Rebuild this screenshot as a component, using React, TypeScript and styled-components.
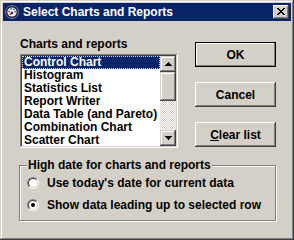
import styled, { createGlobalStyle } from 'styled-components';

const GlobalStyle = createGlobalStyle`
  html, body {
    margin: 0;
    padding: 0;
    background: #d4d0c8;
  }
  body {
    font-family: "Liberation Sans", Arial, sans-serif;
  }
`;

const raised = 'inset -1px -1px #404040, inset 1px 1px #d4d0c8, inset -2px -2px #808080, inset 2px 2px #fff';
const raisedButton = 'inset -1px -1px #404040, inset 1px 1px #fff, inset -2px -2px #808080, inset 2px 2px #d4d0c8';

const items = [
  'Control Chart',
  'Histogram',
  'Statistics List',
  'Report Writer',
  'Data Table (and Pareto)',
  'Combination Chart',
  'Scatter Chart',
];

const ArrowUp = () => (
  <svg width="7" height="4" viewBox="0 0 7 4" shapeRendering="crispEdges">
    <path d="M3 0h1v1H3zM2 1h3v1H2zM1 2h5v1H1zM0 3h7v1H0z" fill="#000" />
  </svg>
);

const ArrowDown = () => (
  <svg width="7" height="4" viewBox="0 0 7 4" shapeRendering="crispEdges">
    <path d="M0 0h7v1H0zM1 1h5v1H1zM2 2h3v1H2zM3 3h1v1H3z" fill="#000" />
  </svg>
);

const CloseGlyph = () => (
  <svg width="8" height="7" viewBox="0 0 8 7" shapeRendering="crispEdges">
    <path
      d="M0 0h2v1H0zM6 0h2v1H6zM1 1h2v1H1zM5 1h2v1H5zM2 2h4v1H2zM3 3h2v1H3zM2 4h4v1H2zM1 5h2v1H1zM5 5h2v1H5zM0 6h2v1H0zM6 6h2v1H6z"
      fill="#000"
    />
  </svg>
);

const AppIcon = () => (
  <svg width="16" height="16" viewBox="0 0 16 16">
    <circle cx="8" cy="8" r="6.6" fill="#2a2a3e" stroke="#8a8a9a" strokeWidth="0.8" />
    <circle cx="8" cy="8" r="4.6" fill="#eef0f6" />
    <rect x="4.2" y="6.8" width="1.6" height="1.4" fill="#d02020" />
    <rect x="6.4" y="4.2" width="1.4" height="1.4" fill="#2040c0" />
    <rect x="9.2" y="4.6" width="1.4" height="1.4" fill="#2040c0" />
    <rect x="10.4" y="7" width="1.4" height="1.4" fill="#2040c0" />
    <path d="M8 8.6 L5.6 10.8" stroke="#c01818" strokeWidth="1.2" />
    <circle cx="8" cy="9" r="1.3" fill="#303040" />
  </svg>
);

export default function App() {
  return (
    <>
      <GlobalStyle />
      <Window>
        <TitleBar>
          <AppIcon />
          <TitleText>Select Charts and Reports</TitleText>
          <CloseButton>
            <CloseGlyph />
          </CloseButton>
        </TitleBar>
        <Body>
          <TopRow>
            <LeftColumn>
              <FieldLabel>Charts and reports</FieldLabel>
              <ListBox>
                <ListItems>
                  {items.map((item, i) => (
                    <ListItem key={item} $selected={i === 0}>
                      {item}
                    </ListItem>
                  ))}
                </ListItems>
                <ScrollBar>
                  <ScrollButton>
                    <ArrowUp />
                  </ScrollButton>
                  <ScrollThumb />
                  <ScrollTrack />
                  <ScrollButton>
                    <ArrowDown />
                  </ScrollButton>
                </ScrollBar>
              </ListBox>
            </LeftColumn>
            <ButtonColumn>
              <PushButton $default>OK</PushButton>
              <PushButton>Cancel</PushButton>
              <PushButton>
                <u>C</u>lear list
              </PushButton>
            </ButtonColumn>
          </TopRow>
          <GroupBox>
            <GroupTitle>High date for charts and reports</GroupTitle>
            <RadioRow>
              <RadioOuter>
                <RadioInner />
              </RadioOuter>
              <RadioLabel>Use today's date for current data</RadioLabel>
            </RadioRow>
            <RadioRow>
              <RadioOuter>
                <RadioInner>
                  <RadioDot />
                </RadioInner>
              </RadioOuter>
              <RadioLabel>Show data leading up to selected row</RadioLabel>
            </RadioRow>
          </GroupBox>
        </Body>
      </Window>
    </>
  );
}

const Window = styled.div`
  width: 294px;
  height: 240px;
  box-sizing: border-box;
  padding: 3px;
  background: #d4d0c8;
  box-shadow: ${raised};
  display: flex;
  flex-direction: column;
`;

const TitleBar = styled.div`
  height: 18px;
  background: #0a246a;
  display: flex;
  align-items: center;
  padding: 0 2px 0 1px;
  flex-shrink: 0;
`;

const TitleText = styled.span`
  margin-left: 3px;
  color: #fff;
  font-weight: bold;
  font-size: 12px;
  line-height: 18px;
  white-space: nowrap;
`;

const CloseButton = styled.div`
  margin-left: auto;
  width: 16px;
  height: 14px;
  box-sizing: border-box;
  background: #d4d0c8;
  box-shadow: ${raisedButton};
  display: flex;
  align-items: center;
  justify-content: center;
  padding: 0 1px 1px 0;
`;

const Body = styled.div`
  padding: 16px 0 0 17px;
  display: flex;
  flex-direction: column;
`;

const TopRow = styled.div`
  display: flex;
  gap: 17px;
`;

const LeftColumn = styled.div`
  width: 158px;
  display: flex;
  flex-direction: column;
`;

const FieldLabel = styled.div`
  height: 14px;
  line-height: 14px;
  margin-bottom: 3px;
  font-size: 12px;
  font-weight: bold;
  color: #000;
`;

const ListBox = styled.div`
  height: 94px;
  box-sizing: border-box;
  padding: 2px;
  background: #fff;
  box-shadow: inset -1px -1px #fff, inset 1px 1px #808080, inset -2px -2px #d4d0c8, inset 2px 2px #404040;
  display: flex;
`;

const ListItems = styled.div`
  flex: 1;
  overflow: hidden;
`;

const ListItem = styled.div<{ $selected?: boolean }>`
  height: 13px;
  line-height: 13px;
  padding-left: 2px;
  font-size: 12px;
  font-weight: bold;
  white-space: nowrap;
  color: ${({ $selected }) => ($selected ? '#fff' : '#000')};
  background: ${({ $selected }) => ($selected ? '#0a246a' : 'transparent')};
  outline: ${({ $selected }) => ($selected ? '1px dotted #f0d890' : 'none')};
  outline-offset: -1px;
`;

const ScrollBar = styled.div`
  width: 16px;
  display: flex;
  flex-direction: column;
`;

const ScrollButton = styled.div`
  height: 16px;
  flex-shrink: 0;
  background: #d4d0c8;
  box-shadow: ${raised};
  display: flex;
  align-items: center;
  justify-content: center;
  padding-bottom: 1px;
  box-sizing: border-box;
`;

const ScrollThumb = styled.div`
  height: 29px;
  flex-shrink: 0;
  background: #d4d0c8;
  box-shadow: ${raised};
`;

const ScrollTrack = styled.div`
  flex: 1;
  background: repeating-conic-gradient(#fff 0 25%, #d4d0c8 0 50%) 0 0 / 2px 2px;
`;

const ButtonColumn = styled.div`
  padding-top: 5px;
  display: flex;
  flex-direction: column;
  gap: 15px;
`;

const PushButton = styled.div<{ $default?: boolean }>`
  width: 81px;
  height: 25px;
  box-sizing: border-box;
  background: #d4d0c8;
  box-shadow: ${({ $default }) =>
    $default
      ? 'inset 0 0 0 1px #000, inset -2px -2px #808080, inset 2px 2px #fff'
      : raisedButton};
  display: flex;
  align-items: center;
  justify-content: center;
  font-size: 12px;
  font-weight: bold;
  color: #000;
`;

const GroupBox = styled.div`
  position: relative;
  margin: 17px 0 0 -1px;
  width: 257px;
  height: 56px;
  box-sizing: border-box;
  border: 1px solid #808080;
  box-shadow: inset 1px 1px #fff, 1px 1px 0 #fff;
  padding: 9px 0 0 7px;
  display: flex;
  flex-direction: column;
  gap: 6px;
`;

const GroupTitle = styled.span`
  position: absolute;
  top: -8px;
  left: 7px;
  padding: 0 1px;
  background: #d4d0c8;
  font-size: 12px;
  font-weight: bold;
  line-height: 14px;
  color: #000;
  white-space: nowrap;
`;

const RadioRow = styled.div`
  height: 16px;
  display: flex;
  align-items: center;
  gap: 8px;
`;

const RadioOuter = styled.span`
  width: 12px;
  height: 12px;
  box-sizing: border-box;
  border-radius: 50%;
  border: 1px solid;
  border-color: #808080 #fff #fff #808080;
  display: flex;
`;

const RadioInner = styled.span`
  width: 10px;
  height: 10px;
  box-sizing: border-box;
  border-radius: 50%;
  border: 1px solid;
  border-color: #404040 #d4d0c8 #d4d0c8 #404040;
  background: #fff;
  display: flex;
  align-items: center;
  justify-content: center;
`;

const RadioDot = styled.span`
  width: 4px;
  height: 4px;
  border-radius: 50%;
  background: #000;
`;

const RadioLabel = styled.span`
  font-size: 12px;
  font-weight: bold;
  line-height: 16px;
  color: #000;
  white-space: nowrap;
`;
